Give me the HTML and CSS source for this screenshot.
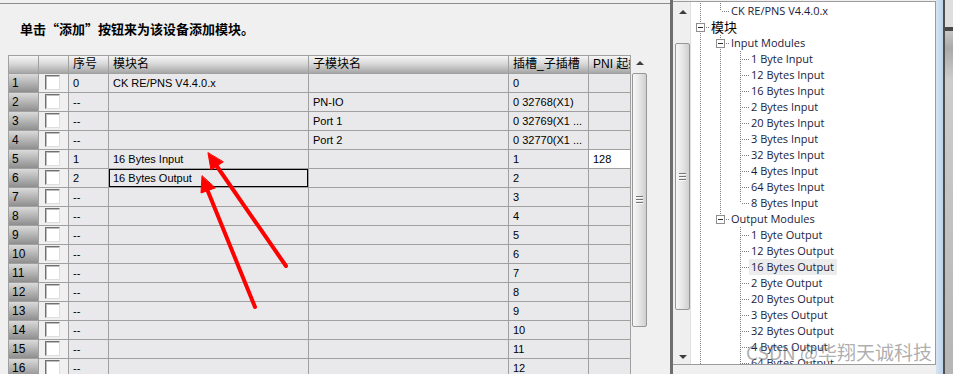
FILE: index.html
```html
<!DOCTYPE html>
<html lang="zh-CN">
<head>
  <meta charset="UTF-8" />
  <title>模块配置</title>
  <link rel="stylesheet" href="styles.css">
</head>
<body>
  <div class="app">
    <section class="left">
      <p class="hint">单击“添加”按钮来为该设备添加模块。</p>
      <div class="grid-wrap">
        <div class="grid">
          <div class="row head">
            <div class="cell rh"></div><div class="cell cb"></div>
            <div class="cell w40">序号</div><div class="cell w200">模块名</div><div class="cell w200">子模块名</div><div class="cell w80">插槽_子插槽</div><div class="cell w60">PNI 起始</div>
          </div>
          <div class="row">
            <div class="cell rh">1</div><div class="cell cb"><span class="box"></span></div>
            <div class="cell w40">0</div><div class="cell w200">CK RE/PNS V4.4.0.x</div><div class="cell w200"></div><div class="cell w80">0</div><div class="cell w60"></div>
          </div>
          <div class="row">
            <div class="cell rh">2</div><div class="cell cb"><span class="box"></span></div>
            <div class="cell w40">--</div><div class="cell w200"></div><div class="cell w200">PN-IO</div><div class="cell w80">0 32768(X1)</div><div class="cell w60"></div>
          </div>
          <div class="row">
            <div class="cell rh">3</div><div class="cell cb"><span class="box"></span></div>
            <div class="cell w40">--</div><div class="cell w200"></div><div class="cell w200">Port 1</div><div class="cell w80">0 32769(X1 ...</div><div class="cell w60"></div>
          </div>
          <div class="row">
            <div class="cell rh">4</div><div class="cell cb"><span class="box"></span></div>
            <div class="cell w40">--</div><div class="cell w200"></div><div class="cell w200">Port 2</div><div class="cell w80">0 32770(X1 ...</div><div class="cell w60"></div>
          </div>
          <div class="row">
            <div class="cell rh">5</div><div class="cell cb"><span class="box"></span></div>
            <div class="cell w40">1</div><div class="cell w200">16 Bytes Input</div><div class="cell w200"></div><div class="cell w80">1</div><div class="cell w60 edit">128</div>
          </div>
          <div class="row">
            <div class="cell rh">6</div><div class="cell cb"><span class="box"></span></div>
            <div class="cell w40">2</div><div class="cell w200 sel">16 Bytes Output</div><div class="cell w200"></div><div class="cell w80">2</div><div class="cell w60"></div>
          </div>
          <div class="row">
            <div class="cell rh">7</div><div class="cell cb"><span class="box"></span></div>
            <div class="cell w40">--</div><div class="cell w200"></div><div class="cell w200"></div><div class="cell w80">3</div><div class="cell w60"></div>
          </div>
          <div class="row">
            <div class="cell rh">8</div><div class="cell cb"><span class="box"></span></div>
            <div class="cell w40">--</div><div class="cell w200"></div><div class="cell w200"></div><div class="cell w80">4</div><div class="cell w60"></div>
          </div>
          <div class="row">
            <div class="cell rh">9</div><div class="cell cb"><span class="box"></span></div>
            <div class="cell w40">--</div><div class="cell w200"></div><div class="cell w200"></div><div class="cell w80">5</div><div class="cell w60"></div>
          </div>
          <div class="row">
            <div class="cell rh">10</div><div class="cell cb"><span class="box"></span></div>
            <div class="cell w40">--</div><div class="cell w200"></div><div class="cell w200"></div><div class="cell w80">6</div><div class="cell w60"></div>
          </div>
          <div class="row">
            <div class="cell rh">11</div><div class="cell cb"><span class="box"></span></div>
            <div class="cell w40">--</div><div class="cell w200"></div><div class="cell w200"></div><div class="cell w80">7</div><div class="cell w60"></div>
          </div>
          <div class="row">
            <div class="cell rh">12</div><div class="cell cb"><span class="box"></span></div>
            <div class="cell w40">--</div><div class="cell w200"></div><div class="cell w200"></div><div class="cell w80">8</div><div class="cell w60"></div>
          </div>
          <div class="row">
            <div class="cell rh">13</div><div class="cell cb"><span class="box"></span></div>
            <div class="cell w40">--</div><div class="cell w200"></div><div class="cell w200"></div><div class="cell w80">9</div><div class="cell w60"></div>
          </div>
          <div class="row">
            <div class="cell rh">14</div><div class="cell cb"><span class="box"></span></div>
            <div class="cell w40">--</div><div class="cell w200"></div><div class="cell w200"></div><div class="cell w80">10</div><div class="cell w60"></div>
          </div>
          <div class="row">
            <div class="cell rh">15</div><div class="cell cb"><span class="box"></span></div>
            <div class="cell w40">--</div><div class="cell w200"></div><div class="cell w200"></div><div class="cell w80">11</div><div class="cell w60"></div>
          </div>
          <div class="row">
            <div class="cell rh">16</div><div class="cell cb"><span class="box"></span></div>
            <div class="cell w40">--</div><div class="cell w200"></div><div class="cell w200"></div><div class="cell w80">12</div><div class="cell w60"></div>
          </div>
        </div>
        <div class="vs">
          <div class="arr"><span class="up"></span></div>
          <div class="thumb grid-thumb"><span class="grip"></span></div>
        </div>
      </div>
    </section>

    <section class="right">
      <div class="rcol">
        <div class="treebox">
          <div class="vs tvs">
            <div class="arr tarr"><span class="up"></span></div>
            <div class="thumb tree-thumb"><span class="grip"></span></div>
            <div class="fill"></div>
            <div class="arr tarr-dn"><span class="down"></span></div>
          </div>
          <div class="tree">
            <div class="trow"><span class="g v"></span><span class="c l"></span><span class="lbl">CK RE/PNS V4.4.0.x</span></div>
            <div class="trow"><span class="c bt"><span class="bx"></span></span><span class="lbl root">模块</span></div>
            <div class="trow"><span class="g v"></span><span class="c bt"><span class="bx"></span></span><span class="lbl">Input Modules</span></div>
            <div class="trow"><span class="g v"></span><span class="g v"></span><span class="c t"></span><span class="lbl">1 Byte Input</span></div>
            <div class="trow"><span class="g v"></span><span class="g v"></span><span class="c t"></span><span class="lbl">12 Bytes Input</span></div>
            <div class="trow"><span class="g v"></span><span class="g v"></span><span class="c t"></span><span class="lbl">16 Bytes Input</span></div>
            <div class="trow"><span class="g v"></span><span class="g v"></span><span class="c t"></span><span class="lbl">2 Bytes Input</span></div>
            <div class="trow"><span class="g v"></span><span class="g v"></span><span class="c t"></span><span class="lbl">20 Bytes Input</span></div>
            <div class="trow"><span class="g v"></span><span class="g v"></span><span class="c t"></span><span class="lbl">3 Bytes Input</span></div>
            <div class="trow"><span class="g v"></span><span class="g v"></span><span class="c t"></span><span class="lbl">32 Bytes Input</span></div>
            <div class="trow"><span class="g v"></span><span class="g v"></span><span class="c t"></span><span class="lbl">4 Bytes Input</span></div>
            <div class="trow"><span class="g v"></span><span class="g v"></span><span class="c t"></span><span class="lbl">64 Bytes Input</span></div>
            <div class="trow"><span class="g v"></span><span class="g v"></span><span class="c l"></span><span class="lbl">8 Bytes Input</span></div>
            <div class="trow"><span class="g v"></span><span class="c bl"><span class="bx"></span></span><span class="lbl">Output Modules</span></div>
            <div class="trow"><span class="g v"></span><span class="g"></span><span class="c t"></span><span class="lbl">1 Byte Output</span></div>
            <div class="trow"><span class="g v"></span><span class="g"></span><span class="c t"></span><span class="lbl">12 Bytes Output</span></div>
            <div class="trow"><span class="g v"></span><span class="g"></span><span class="c t"></span><span class="lbl hl">16 Bytes Output</span></div>
            <div class="trow"><span class="g v"></span><span class="g"></span><span class="c t"></span><span class="lbl">2 Byte Output</span></div>
            <div class="trow"><span class="g v"></span><span class="g"></span><span class="c t"></span><span class="lbl">20 Bytes Output</span></div>
            <div class="trow"><span class="g v"></span><span class="g"></span><span class="c t"></span><span class="lbl">3 Bytes Output</span></div>
            <div class="trow"><span class="g v"></span><span class="g"></span><span class="c t"></span><span class="lbl">32 Bytes Output</span></div>
            <div class="trow"><span class="g v"></span><span class="g"></span><span class="c t"></span><span class="lbl">4 Bytes Output</span></div>
            <div class="trow"><span class="g v"></span><span class="g"></span><span class="c t"></span><span class="lbl">64 Bytes Output</span></div>
          </div>
        </div>
      </div>
      <div class="edge"><span class="e1"></span><span class="e2"></span><span class="e3"></span></div>
    </section>
  </div>

  <svg class="marks" width="953" height="374" viewBox="0 0 953 374">
    <g fill="#ff0000" stroke="#ff0000" stroke-linecap="round" stroke-linejoin="round">
      <line x1="216" y1="165" x2="286" y2="266" stroke-width="4" />
      <polygon points="208,153 211,170 223,162" stroke-width="1" />
      <line x1="207" y1="189" x2="255" y2="307" stroke-width="4" />
      <polygon points="202,176 201,193 215,188" stroke-width="1" />
    </g>
  </svg>
  <div class="wm">CSDN @华翔天诚科技</div>
</body>
</html>
```

FILE: styles.css
```css
:root {
  --dv: repeating-linear-gradient(to bottom, #7f7f7f 0 1px, transparent 1px 2px);
  --dh: repeating-linear-gradient(to right, #7f7f7f 0 1px, transparent 1px 2px);
}
body {
  margin: 0;
  width: 953px;
  height: 374px;
  overflow: hidden;
  position: relative;
  background: #f0f0f0;
  color: #000;
  font-family: "Liberation Sans", "Noto Sans CJK SC", sans-serif;
  font-size: 11px;
}
.app {
  display: flex;
  height: 374px;
}

/* left side: module table */
.left {
  width: 670px;
  flex: none;
  box-sizing: border-box;
  margin-top: 3px;
  border-top: 1px solid #8c8c8c;
  padding-left: 8px;
}
.hint {
  margin: 16px 0 0 12px;
  font: bold 13px/18px "Noto Sans CJK SC", sans-serif;
}
.grid-wrap {
  display: flex;
  margin-top: 17px;
}
.grid {
  width: 623px;
  flex: none;
  box-sizing: border-box;
  border: 1px solid #a0a0a0;
  border-bottom: none;
  overflow: hidden;
}
.row {
  display: flex;
  height: 19px;
}
.cell {
  flex: none;
  box-sizing: border-box;
  height: 19px;
  padding-left: 4px;
  border-right: 1px solid #a0a0a0;
  border-bottom: 1px solid #a0a0a0;
  line-height: 18px;
  white-space: nowrap;
  overflow: hidden;
  background: #e9e9eb;
}
.row.head {
  height: 18px;
}
.head .cell {
  height: 18px;
  line-height: 17px;
  font-size: 12px;
  background: linear-gradient(#f5f5f5, #d9d9d9 45%, #a6a6a6);
}
.rh {
  width: 30px;
  padding-left: 3px;
  font-size: 12px;
  background: linear-gradient(#dadada, #bcbcbc 40%, #8e8e8e);
}
.cb {
  width: 30px;
  padding: 1px 0 0 6px;
  background: #f0f0f0;
}
.w40 { width: 40px; }
.w200 { width: 200px; }
.w80 { width: 80px; }
.w60 { width: 60px; }
.edit {
  background: #fff;
}
.sel {
  box-shadow: inset 0 0 0 1px #000;
}
.box {
  display: block;
  width: 15px;
  height: 15px;
  box-sizing: border-box;
  background: #fff;
  border: 1px solid;
  border-color: #707070 #dedede #dedede #707070;
  box-shadow: inset 1px 1px 0 #bdbdbd;
}

/* scrollbars */
.vs {
  width: 15px;
  flex: none;
  margin-left: 1px;
  display: flex;
  flex-direction: column;
}
.arr {
  height: 15px;
  display: flex;
  align-items: center;
  justify-content: center;
}
.up, .down {
  width: 0;
  height: 0;
  border-left: 4px solid transparent;
  border-right: 4px solid transparent;
}
.up { border-bottom: 4px solid #3d3d3d; }
.down { border-top: 4px solid #3d3d3d; }
.thumb {
  box-sizing: border-box;
  border: 1px solid #969696;
  border-radius: 2px;
  background: linear-gradient(to right, #f7f7f7, #e6e6e6 50%, #cfcfcf);
  display: flex;
  align-items: center;
  justify-content: center;
}
.grid-thumb {
  margin-top: 3px;
  height: 254px;
}
.grip {
  width: 7px;
  height: 8px;
  background: repeating-linear-gradient(to bottom, #747474 0 1px, #fbfbfb 1px 2px, transparent 2px 3px);
}

/* right side: catalogue tree */
.right {
  flex: 1;
  display: flex;
  border-left: 3px solid #6e6e6e;
}
.rcol {
  width: 263px;
  flex: none;
  padding-top: 1px;
}
.treebox {
  display: flex;
  height: 364px;
  box-sizing: border-box;
  border: 1px solid #9c9c9c;
  border-left: none;
  background: #fff;
  overflow: hidden;
}
.tvs {
  width: 18px;
  margin: 0;
  box-sizing: border-box;
  padding-left: 2px;
  background: #efefef;
  border-right: 1px solid #e0e0e0;
}
.tarr { height: 20px; }
.tree-thumb {
  margin-top: 21px;
  height: 267px;
}
.fill { flex: 1; }
.tarr-dn { height: 14px; }

.tree {
  flex: 1;
  padding-top: 1px;
  font: 11px "Open Sans", sans-serif;
  color: #1b1b3c;
}
.trow {
  display: flex;
  height: 16px;
  line-height: 16px;
  white-space: nowrap;
}
.g {
  width: 20px;
  height: 16px;
  flex: none;
}
.g.v {
  background: var(--dv) 9px 0 / 1px 16px no-repeat;
}
.c {
  width: 18px;
  height: 16px;
  flex: none;
}
.c.t {
  background: var(--dv) 9px 0 / 1px 16px no-repeat, var(--dh) 11px 8px / 7px 1px no-repeat;
}
.c.l {
  background: var(--dv) 9px 0 / 1px 8px no-repeat, var(--dh) 11px 8px / 7px 1px no-repeat;
}
.c.bt {
  background: var(--dv) 9px 0 / 1px 16px no-repeat, var(--dh) 15px 8px / 3px 1px no-repeat;
}
.c.bl {
  background: var(--dv) 9px 0 / 1px 8px no-repeat, var(--dh) 15px 8px / 3px 1px no-repeat;
}
.bx {
  display: flex;
  align-items: center;
  justify-content: center;
  width: 9px;
  height: 9px;
  box-sizing: border-box;
  margin: 4px 0 0 5px;
  border: 1px solid #8e8e8e;
  background: #fff;
}
.bx::before {
  content: "";
  width: 5px;
  height: 1px;
  background: #2a2a2a;
}
.lbl {
  padding: 0 3px 0 2px;
}
.lbl.root {
  font: 13px/16px "Noto Sans CJK SC", sans-serif;
  color: #000;
}
.lbl.hl {
  background: #ececec;
}

.edge {
  width: 17px;
  flex: none;
  display: flex;
}
.e1 {
  width: 7px;
  background: linear-gradient(to right, #d6e4f3, #bed3ea);
}
.e2 {
  width: 2px;
  background: #4f4f4f;
}
.e3 {
  flex: 1;
  background: linear-gradient(#dedede 0 27px, #474747 27px 31px, #c6c6c6 31px, #a9a9a9 48px, #cdcdcd 80px, #b5b5b5);
}

/* overlays */
.marks {
  position: absolute;
  left: 0;
  top: 0;
  pointer-events: none;
}
.wm {
  position: absolute;
  left: 746px;
  top: 341px;
  font: 19px/22px "Noto Sans CJK SC", sans-serif;
  color: rgba(105, 105, 105, 0.55);
  white-space: nowrap;
}
```
